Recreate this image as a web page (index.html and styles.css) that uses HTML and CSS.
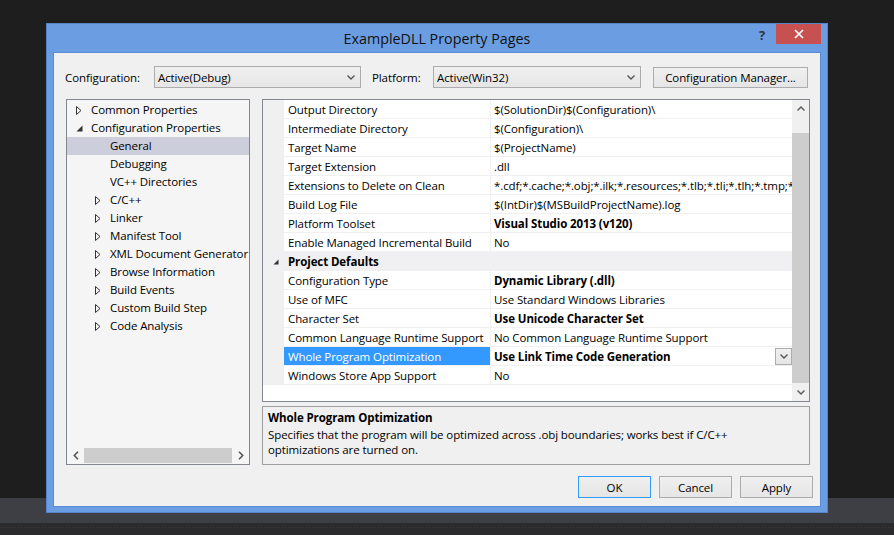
FILE: index.html
```html
<!DOCTYPE html>
<html>
<head>
<meta charset="utf-8">
<title>ExampleDLL Property Pages</title>
<link rel="stylesheet" href="styles.css">
</head>
<body>
<div class="desktop">
  <div class="desk-top"></div>
  <div class="desk-band"></div>
  <div class="desk-bottom"></div>
</div>

<div class="dialog">
  <div class="titlebar">
    <div></div>
    <div class="title">ExampleDLL Property Pages</div>
    <div class="tb-controls">
      <span class="help">?</span>
      <span class="close"><svg width="10" height="10" viewBox="0 0 10 10"><path d="M1 1L9 9M9 1L1 9" stroke="#fff" stroke-width="1.7"/></svg></span>
    </div>
  </div>
  <div class="client">
    <div class="toprow">
      <span class="lbl lbl-config">Configuration:</span>
      <div class="combo combo-config"><span>Active(Debug)</span><svg class="chev" width="8" height="5" viewBox="0 0 8 5"><path d="M0.5 0.5L4 4L7.5 0.5" fill="none" stroke="#555" stroke-width="1.4"/></svg></div>
      <span class="lbl lbl-platform">Platform:</span>
      <div class="combo combo-platform"><span>Active(Win32)</span><svg class="chev" width="8" height="5" viewBox="0 0 8 5"><path d="M0.5 0.5L4 4L7.5 0.5" fill="none" stroke="#555" stroke-width="1.4"/></svg></div>
      <button class="btn btn-cm">Configuration Manager...</button>
    </div>

    <div class="main">
      <div class="tree">
        <div class="tree-items">
          <div class="node l0"><span class="arr"><svg width="6" height="9" viewBox="0 0 6 9"><path d="M0.5 0.5L5 4.5L0.5 8.5Z" fill="none" stroke="#333" stroke-width="1"/></svg></span>Common Properties</div>
          <div class="node l0"><span class="arr"><svg width="7" height="7" viewBox="0 0 7 7"><path d="M6.5 0.5L6.5 6.5L0.5 6.5Z" fill="#333"/></svg></span>Configuration Properties</div>
          <div class="node l1 sel"><span class="arr"></span>General</div>
          <div class="node l1"><span class="arr"></span>Debugging</div>
          <div class="node l1"><span class="arr"></span>VC++ Directories</div>
          <div class="node l1"><span class="arr"><svg width="6" height="9" viewBox="0 0 6 9"><path d="M0.5 0.5L5 4.5L0.5 8.5Z" fill="none" stroke="#333" stroke-width="1"/></svg></span>C/C++</div>
          <div class="node l1"><span class="arr"><svg width="6" height="9" viewBox="0 0 6 9"><path d="M0.5 0.5L5 4.5L0.5 8.5Z" fill="none" stroke="#333" stroke-width="1"/></svg></span>Linker</div>
          <div class="node l1"><span class="arr"><svg width="6" height="9" viewBox="0 0 6 9"><path d="M0.5 0.5L5 4.5L0.5 8.5Z" fill="none" stroke="#333" stroke-width="1"/></svg></span>Manifest Tool</div>
          <div class="node l1"><span class="arr"><svg width="6" height="9" viewBox="0 0 6 9"><path d="M0.5 0.5L5 4.5L0.5 8.5Z" fill="none" stroke="#333" stroke-width="1"/></svg></span>XML Document Generator</div>
          <div class="node l1"><span class="arr"><svg width="6" height="9" viewBox="0 0 6 9"><path d="M0.5 0.5L5 4.5L0.5 8.5Z" fill="none" stroke="#333" stroke-width="1"/></svg></span>Browse Information</div>
          <div class="node l1"><span class="arr"><svg width="6" height="9" viewBox="0 0 6 9"><path d="M0.5 0.5L5 4.5L0.5 8.5Z" fill="none" stroke="#333" stroke-width="1"/></svg></span>Build Events</div>
          <div class="node l1"><span class="arr"><svg width="6" height="9" viewBox="0 0 6 9"><path d="M0.5 0.5L5 4.5L0.5 8.5Z" fill="none" stroke="#333" stroke-width="1"/></svg></span>Custom Build Step</div>
          <div class="node l1"><span class="arr"><svg width="6" height="9" viewBox="0 0 6 9"><path d="M0.5 0.5L5 4.5L0.5 8.5Z" fill="none" stroke="#333" stroke-width="1"/></svg></span>Code Analysis</div>
        </div>
        <div class="hscroll">
          <span class="sarrow"><svg width="6" height="9" viewBox="0 0 6 9"><path d="M5 0.8L1.3 4.5L5 8.2" fill="none" stroke="#555" stroke-width="1.6"/></svg></span>
          <div class="htrack"><div class="hthumb"></div></div>
          <span class="sarrow"><svg width="6" height="9" viewBox="0 0 6 9"><path d="M1 0.8L4.7 4.5L1 8.2" fill="none" stroke="#555" stroke-width="1.6"/></svg></span>
        </div>
      </div>

      <div class="right">
        <div class="grid">
          <div class="rows">
            <div class="row"><span class="m"></span><span class="n">Output Directory</span><span class="v">$(SolutionDir)$(Configuration)\</span></div>
            <div class="row"><span class="m"></span><span class="n">Intermediate Directory</span><span class="v">$(Configuration)\</span></div>
            <div class="row"><span class="m"></span><span class="n">Target Name</span><span class="v">$(ProjectName)</span></div>
            <div class="row"><span class="m"></span><span class="n">Target Extension</span><span class="v">.dll</span></div>
            <div class="row"><span class="m"></span><span class="n">Extensions to Delete on Clean</span><span class="v">*.cdf;*.cache;*.obj;*.ilk;*.resources;*.tlb;*.tli;*.tlh;*.tmp;*.rsp;*.pgc;*.pgd;*.meta;*.tlog;*.manifest;*.res;*.pch;*.exp;*.idb;*.rep;*.xdc;*.pdb;*_manifest.rc;*.bsc;*.sbr;*.xml;*.metagen;*.bi</span></div>
            <div class="row"><span class="m"></span><span class="n">Build Log File</span><span class="v">$(IntDir)$(MSBuildProjectName).log</span></div>
            <div class="row"><span class="m"></span><span class="n">Platform Toolset</span><span class="v b">Visual Studio 2013 (v120)</span></div>
            <div class="row"><span class="m"></span><span class="n">Enable Managed Incremental Build</span><span class="v">No</span></div>
            <div class="cat"><span class="cat-arr"><svg width="6" height="6" viewBox="0 0 6 6"><path d="M5.5 0.5L5.5 5.5L0.5 5.5Z" fill="#333"/></svg></span><span class="cat-name">Project Defaults</span></div>
            <div class="row"><span class="m"></span><span class="n">Configuration Type</span><span class="v b">Dynamic Library (.dll)</span></div>
            <div class="row"><span class="m"></span><span class="n">Use of MFC</span><span class="v">Use Standard Windows Libraries</span></div>
            <div class="row"><span class="m"></span><span class="n">Character Set</span><span class="v b">Use Unicode Character Set</span></div>
            <div class="row"><span class="m"></span><span class="n">Common Language Runtime Support</span><span class="v">No Common Language Runtime Support</span></div>
            <div class="row rsel"><span class="m"></span><span class="n">Whole Program Optimization</span><span class="v b">Use Link Time Code Generation<span class="dd"><svg width="8" height="5" viewBox="0 0 8 5"><path d="M0.5 0.5L4 4L7.5 0.5" fill="none" stroke="#555" stroke-width="1.4"/></svg></span></span></div>
            <div class="row"><span class="m"></span><span class="n">Windows Store App Support</span><span class="v">No</span></div>
          </div>
          <div class="vscroll">
            <span class="varrow"><svg width="8" height="5" viewBox="0 0 8 5"><path d="M0.5 4.5L4 1L7.5 4.5" fill="none" stroke="#606060" stroke-width="1.5"/></svg></span>
            <div class="vtrack"><div class="vthumb"></div></div>
            <span class="varrow"><svg width="8" height="5" viewBox="0 0 8 5"><path d="M0.5 0.5L4 4L7.5 0.5" fill="none" stroke="#606060" stroke-width="1.5"/></svg></span>
          </div>
        </div>
        <div class="desc">
          <div class="desc-title">Whole Program Optimization</div>
          <div class="desc-text">Specifies that the program will be optimized across .obj boundaries; works best if C/C++<br>optimizations are turned on.</div>
        </div>
      </div>
    </div>

    <div class="buttons">
      <button class="btn btn-ok">OK</button>
      <button class="btn">Cancel</button>
      <button class="btn">Apply</button>
    </div>
  </div>
</div>
</body>
</html>
```

FILE: styles.css
```css
* { box-sizing: border-box; }
html, body { margin: 0; padding: 0; }
body {
  width: 894px;
  height: 535px;
  overflow: hidden;
  position: relative;
  font-family: "Open Sans", "Noto Sans", "Liberation Sans", sans-serif;
  font-size: 11.5px;
  letter-spacing: -0.1px;
  color: #000;
}
.desktop { display: flex; flex-direction: column; height: 535px; }
.desk-top { flex: 1; background: #1e1e1e; }
.desk-band { height: 25px; background: #3e3e45; }
.desk-bottom {
  height: 12px;
  background: linear-gradient(90deg, #3a3a3e 1px, transparent 1px) 0 4px / 3px 1px repeat-x, #2b2b2e;
}

.dialog {
  position: absolute;
  left: 46px;
  top: 23px;
  width: 782px;
  height: 490px;
  background: #6b9de3;
  border: 1px solid #5584cc;
  padding: 0 6px 5px 6px;
  display: flex;
  flex-direction: column;
}
.titlebar {
  height: 28px;
  display: grid;
  grid-template-columns: 1fr auto 1fr;
  align-items: start;
}
.title {
  font-size: 14.3px;
  letter-spacing: 0;
  line-height: 28px;
  color: #111;
  padding-top: 1px;
}
.tb-controls { display: flex; justify-content: flex-end; align-items: flex-start; }
.help {
  font-weight: bold;
  font-size: 13px;
  color: #333;
  line-height: 20px;
  margin-right: 11px;
  padding-top: 1px;
}
.close {
  width: 45px;
  height: 20px;
  background: #c75050;
  display: flex;
  align-items: center;
  justify-content: center;
}
.close svg { display: block; }

.client {
  flex: 1;
  background: #f0f0f0;
  border: 1px solid #5a8bd6;
  display: flex;
  flex-direction: column;
}

.toprow {
  display: flex;
  align-items: center;
  height: 22px;
  margin-top: 13px;
  padding-left: 11px;
}
.lbl { white-space: nowrap; }
.lbl-config { width: 89px; }
.lbl-platform { width: 61px; margin-left: 11px; }
.combo {
  height: 22px;
  border: 1px solid #acacac;
  background: linear-gradient(#f0f0f0, #e5e5e5);
  display: flex;
  align-items: center;
  justify-content: space-between;
  padding: 0 5px 0 3px;
}
.combo-config { width: 207px; }
.combo-platform { width: 208px; }
.chev { display: block; }
.btn {
  font-family: inherit;
  font-size: 11.5px;
  letter-spacing: -0.1px;
  color: #000;
  height: 22px;
  border: 1px solid #acacac;
  background: linear-gradient(#f0f0f0, #e5e5e5);
  padding: 0;
  margin: 0;
}
.btn-cm { width: 155px; margin-left: 12px; height: 21px; }

.main {
  display: flex;
  margin-top: 11px;
  padding-left: 12px;
  gap: 12px;
  height: 366px;
}
.tree {
  width: 184px;
  border: 1px solid #828790;
  background: #f5f5f5;
  display: flex;
  flex-direction: column;
}
.tree-items { flex: 1; padding-top: 1px; }
.node {
  height: 18px;
  line-height: 18px;
  display: flex;
  align-items: center;
  white-space: nowrap;
  overflow: hidden;
}
.node.l1 { padding-left: 19px; }
.node.sel { background: #cccedb; }
.arr {
  width: 24px;
  flex: none;
  display: flex;
  align-items: center;
  padding-left: 9px;
}
.arr svg { display: block; }
.hscroll {
  height: 16px;
  margin-bottom: 1px;
  display: flex;
  align-items: center;
}
.sarrow { width: 17px; display: flex; justify-content: center; }
.sarrow svg { display: block; }
.htrack { flex: 1; height: 15px; }
.hthumb { height: 15px; background: #cdcdcd; width: 100%; }

.right { width: 548px; display: flex; flex-direction: column; }
.grid {
  height: 303px;
  border: 1px solid #828790;
  background: #fff;
  display: flex;
}
.rows { flex: 1; overflow: hidden; }
.row {
  display: grid;
  grid-template-columns: 21px 207px 1fr;
  height: 19px;
}
.row .m { background: #f0f0f0; }
.row .n, .row .v {
  border-bottom: 1px solid #f0f0f0;
  line-height: 19px;
  white-space: nowrap;
  overflow: hidden;
}
.row .n { padding-left: 4px; border-right: 1px solid #f0f0f0; }
.row .v { padding-left: 3px; position: relative; }
.b { font-weight: bold; }
.rsel .n { background: #3399ff; color: #fff; }
.dd {
  position: absolute;
  right: 0;
  top: 1px;
  width: 17px;
  height: 17px;
  border: 1px solid #acacac;
  background: linear-gradient(#f0f0f0, #e5e5e5);
  display: flex;
  align-items: center;
  justify-content: center;
}
.dd svg { display: block; }
.cat {
  height: 19px;
  background: #f0f0f3;
  display: flex;
  align-items: center;
}
.cat-arr { width: 25px; padding-left: 10px; display: flex; }
.cat-arr svg { display: block; }
.cat-name { font-weight: bold; line-height: 19px; }

.vscroll {
  width: 17px;
  background: #f0f0f0;
  display: flex;
  flex-direction: column;
}
.varrow { height: 17px; display: flex; align-items: center; justify-content: center; }
.varrow svg { display: block; }
.vtrack { flex: 1; padding-top: 16px; }
.vthumb { height: 250px; background: #cdcdcd; }

.desc {
  margin-top: 4px;
  height: 59px;
  border: 1px solid #a0a0a0;
  background: #f0f0f0;
  padding: 2px 5px 0 5px;
}
.desc-title { font-weight: bold; line-height: 17px; margin-bottom: 1px; }
.desc-text { line-height: 15px; }

.buttons {
  display: flex;
  justify-content: flex-end;
  gap: 8px;
  margin-top: 11px;
  padding-right: 7px;
}
.buttons .btn { width: 73px; }
.btn-ok { border-color: #3399ff; }
```
